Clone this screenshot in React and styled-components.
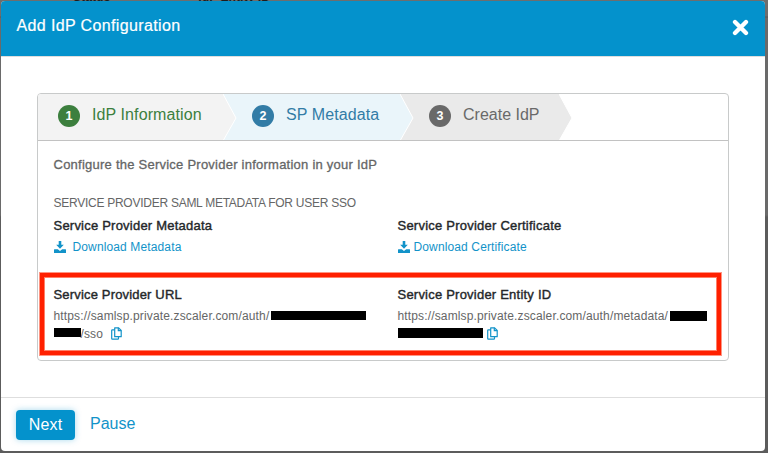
import React from "react";
import styled, { createGlobalStyle } from "styled-components";

const GlobalStyle = createGlobalStyle`
  * { box-sizing: border-box; }
  body {
    margin: 0;
    font-family: "Liberation Sans", Arial, sans-serif;
    color: #656666;
    overflow: hidden;
  }
`;

const Page = styled.div`
  position: relative;
  width: 768px;
  height: 453px;
  padding: 1px 3px 2px 1px;
  overflow: hidden;
  background: linear-gradient(#6e6e6e 0, #6e6e6e 16px, #585858 17px, #6a6a6a 18px, #6a6a6a 215px, #5c5c5c 217px, #5c5c5c 100%);
`;

const Underlay = styled.div`
  position: absolute;
  top: -9px;
  left: 73px;
  display: flex;
  gap: 88px;
  color: #1c1c1c;
  font-size: 12px;
  font-weight: 700;
  line-height: 12px;
  letter-spacing: 0.1px;
`;

const Modal = styled.main`
  position: relative;
  display: flex;
  flex-direction: column;
  height: 450px;
  border-radius: 4px;
  background: #fff;
  overflow: hidden;
`;

const Header = styled.header`
  display: flex;
  justify-content: space-between;
  height: 56px;
  padding: 15px 16px 0 15.5px;
  background: #0492cc;
  border-bottom: 1px solid #dedede;
  color: #fff;
`;

const Title = styled.h1`
  margin: 0;
  font-size: 16px;
  font-weight: 400;
  line-height: 20px;
  letter-spacing: 0.37px;
  -webkit-text-stroke: 0.2px currentColor;
`;

const CloseButton = styled.button`
  width: 17px;
  height: 17px;
  margin-top: 3px;
  padding: 0;
  border: 0;
  background: none;
  color: #fff;
  svg { display: block; }
`;

const Body = styled.div`
  flex: 1;
  padding: 36px 36px 0;
`;

const Panel = styled.section`
  width: 692px;
  height: 268px;
  border: 1px solid #c8caca;
  border-radius: 4px;
  overflow: hidden;
`;

const Steps = styled.ol`
  display: flex;
  height: 47px;
  margin: 0;
  padding: 0;
  list-style: none;
  border-bottom: 1px solid #c2c2c2;
`;

const Step = styled.li`
  position: relative;
  display: flex;
  gap: 12px;
  width: ${(p) => p.$width}px;
  padding: 11px 0 0 ${(p) => p.$indent}px;
  background: ${(p) => p.$bg};
  color: ${(p) => p.$color};
  font-size: 16px;
  line-height: 20px;
  letter-spacing: ${(p) => p.$track}px;
  white-space: nowrap;
`;

const Badge = styled.span`
  width: 22px;
  height: 22px;
  border-radius: 50%;
  background: ${(p) => p.$color};
  color: #fff;
  font-size: 12.5px;
  font-weight: 700;
  line-height: 22px;
  letter-spacing: 0;
  text-align: center;
`;

const Arrow = styled.svg`
  position: absolute;
  z-index: 1;
  top: 0;
  left: 100%;
  display: block;
`;

const Content = styled.div`
  padding: 15px 0 0 2px;
`;

const Intro = styled.p`
  margin: 0 0 20px 13.5px;
  font-size: 13px;
  line-height: 18px;
  letter-spacing: 0.24px;
  -webkit-text-stroke: 0.3px currentColor;
`;

const SectionTitle = styled.h2`
  margin: 0 0 5px 13.5px;
  font-size: 12px;
  font-weight: 400;
  line-height: 18px;
  letter-spacing: -0.26px;
`;

const Columns = styled.div`
  display: grid;
  grid-template-columns: 344px 1fr;
  padding-left: 13.5px;
`;

const Highlight = styled(Columns)`
  width: 681px;
  height: 82px;
  margin-top: 17px;
  padding: 9px 0 0 9.5px;
  border: 4px solid #ff2000;
  box-shadow: 0 0 0 1px #ff9583, inset 0 0 0 1px #ff8069;
`;

const Label = styled.h3`
  margin: 0;
  color: #24272a;
  font-size: 13px;
  font-weight: 400;
  line-height: 18px;
  letter-spacing: ${(p) => p.$track || 0.22}px;
  -webkit-text-stroke: 0.4px currentColor;
`;

const DownloadLink = styled.a`
  display: flex;
  align-items: center;
  gap: ${(p) => p.$gap}px;
  margin-top: 3px;
  color: #1293c9;
  font-size: 12px;
  line-height: 18px;
  letter-spacing: 0.13px;
`;

const Value = styled.div`
  margin-top: 3px;
  font-size: 12px;
  line-height: 18px;
  letter-spacing: 0.145px;
`;

const Line = styled.div`
  display: flex;
  height: 18px;
  white-space: nowrap;
`;

const Redaction = styled.span`
  width: ${(p) => p.$width}px;
  height: ${(p) => p.$height || 10}px;
  margin: ${(p) => p.$top}px 0 0 ${(p) => p.$before || 0}px;
  background: #000;
`;

const CopySvg = styled.svg`
  display: block;
  flex: none;
  margin: 2px 0 0 ${(p) => p.$gap}px;
  color: #1293c9;
`;

const DownloadIcon = () => (
  <svg width="12" height="12" viewBox="0 0 12 12" fill="currentColor">
    <path d="M4.700 0H7.300V3.800H9.800L6 7.700L2.200 3.800H4.700Z" />
    <path d="M0.500 8.200H3.800L6 10L8.200 8.200H11.500Q12 8.200 12 8.700V11.500Q12 12 11.500 12H0.500Q0 12 0 11.500V8.700Q0 8.200 0.500 8.200Z" />
  </svg>
);

const CopyIcon = ({ gap }) => (
  <CopySvg $gap={gap} width="11" height="13" viewBox="0 0 11 13" fill="none" stroke="currentColor" strokeWidth="1.2">
    <path d="M3.700 0.800H7.600L10.200 3.400V9.700H3.700Z" strokeLinejoin="round" />
    <path d="M7.300 0.800V3.700H10.200" />
    <path d="M3.700 2.800H1.300Q0.700 2.800 0.700 3.400V11.600Q0.700 12.200 1.300 12.200H6.900Q7.500 12.200 7.500 11.600V9.900" />
  </CopySvg>
);

const Footer = styled.footer`
  display: flex;
  gap: 15px;
  height: 54px;
  padding: 12px 15px 0;
  border-top: 1px solid #dedede;
`;

const NextButton = styled.button`
  width: 59px;
  height: 30px;
  padding: 0 0 1px;
  border: 0;
  border-radius: 4px;
  background: #0492cc;
  box-shadow: 0 0 6px rgba(4, 146, 204, 0.35);
  color: #fff;
  font: 16px "Liberation Sans", Arial, sans-serif;
  letter-spacing: 0.15px;
`;

const PauseLink = styled.a`
  color: #1293c9;
  font-size: 16px;
  line-height: 28px;
`;

const steps = [
  { label: "IdP Information", color: "#3c7f3e", bg: "#f3f3f3", width: 185, indent: 20, track: 0.1 },
  { label: "SP Metadata", color: "#327ca6", bg: "#eaf5fa", width: 177, indent: 29, track: 0.1 },
  { label: "Create IdP", color: "#696969", bg: "#eaeaea", width: 159, indent: 29, track: 0 },
];

export default function App() {
  return (
    <Page>
      <GlobalStyle />
      <Underlay aria-hidden="true"><span>Status</span><span>IdP Entity ID</span></Underlay>
      <Modal>
        <Header>
          <Title>Add IdP Configuration</Title>
          <CloseButton aria-label="Close">
            <svg width="17" height="17" viewBox="0 0 17 17">
              <path d="M3 3l11 11M14 3L3 14" stroke="currentColor" strokeWidth="4.3" strokeLinecap="round" />
            </svg>
          </CloseButton>
        </Header>
        <Body>
          <Panel>
            <Steps>
              {steps.map((s, i) => (
                <Step key={s.label} $width={s.width} $indent={s.indent} $bg={s.bg} $color={s.color} $track={s.track}>
                  <Badge $color={s.color}>{i + 1}</Badge>
                  {s.label}
                  <Arrow width="15" height="46" viewBox="0 0 15 46">
                    <path d="M-1 0H0L13 24L0.500 46H-1Z" fill={s.bg} />
                    <path d="M0 0L13 24L0.500 46" fill="none" stroke="#fff" strokeWidth="1" />
                  </Arrow>
                </Step>
              ))}
            </Steps>
            <Content>
              <Intro>Configure the Service Provider information in your IdP</Intro>
              <SectionTitle>SERVICE PROVIDER SAML METADATA FOR USER SSO</SectionTitle>
              <Columns>
                <div>
                  <Label>Service Provider Metadata</Label>
                  <DownloadLink $gap={7}><DownloadIcon />Download Metadata</DownloadLink>
                </div>
                <div>
                  <Label $track={0.23}>Service Provider Certificate</Label>
                  <DownloadLink $gap={4}><DownloadIcon />Download Certificate</DownloadLink>
                </div>
              </Columns>
              <Highlight>
                <div>
                  <Label $track={0.17}>Service Provider URL</Label>
                  <Value>
                    <Line>https://samlsp.private.zscaler.com/auth/<Redaction $width={95} $height={9} $top={4} $before={1.5} /></Line>
                    <Line><Redaction $width={27} $height={9} $top={3} />/sso<CopyIcon gap={8} /></Line>
                  </Value>
                </div>
                <div>
                  <Label>Service Provider Entity ID</Label>
                  <Value>
                    <Line>https://samlsp.private.zscaler.com/auth/metadata/<Redaction $width={37} $top={4} $before={2} /></Line>
                    <Line><Redaction $width={85} $top={3} /><CopyIcon gap={4} /></Line>
                  </Value>
                </div>
              </Highlight>
            </Content>
          </Panel>
        </Body>
        <Footer>
          <NextButton>Next</NextButton>
          <PauseLink>Pause</PauseLink>
        </Footer>
      </Modal>
    </Page>
  );
}
